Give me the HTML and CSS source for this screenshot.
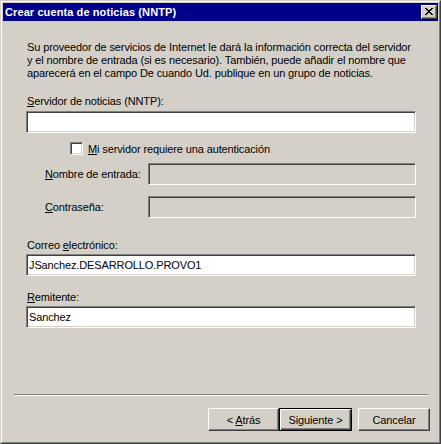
FILE: index.html
```html
<!DOCTYPE html>
<html lang="es">
<head>
<meta charset="utf-8">
<title>Crear cuenta de noticias (NNTP)</title>
<link rel="stylesheet" href="styles.css">
</head>
<body>
<div class="window">
  <div class="frame">
    <div class="titlebar">
      <span class="title">Crear cuenta de noticias (NNTP)</span>
      <button class="close" type="button" aria-label="Cerrar">
        <svg width="8" height="7" viewBox="0 0 8 7" shape-rendering="crispEdges">
          <path d="M0 0h2v1h-2zM6 0h2v1h-2zM1 1h2v1h-2zM5 1h2v1h-2zM2 2h4v1h-4zM3 3h2v1h-2zM2 4h4v1h-4zM1 5h2v1h-2zM5 5h2v1h-2zM0 6h2v1h-2zM6 6h2v1h-2z" fill="#000"/>
        </svg>
      </button>
    </div>
    <div class="body">
      <div class="page">
        <p class="intro">Su proveedor de servicios de Internet le dará la información correcta del servidor<br>y el nombre de entrada (si es necesario). También, puede añadir el nombre que<br>aparecerá en el campo De cuando Ud. publique en un grupo de noticias.</p>
        <div class="lbl lbl-server"><u>S</u>ervidor de noticias (NNTP):</div>
        <div class="field field-server"></div>
        <div class="check-row">
          <span class="checkbox"></span>
          <span class="check-text"><u>M</u>i servidor requiere una autenticación</span>
        </div>
        <div class="auth-row">
          <span class="auth-lbl"><u>N</u>ombre de entrada:</span>
          <div class="field disabled"></div>
        </div>
        <div class="auth-row auth-row-2">
          <span class="auth-lbl"><u>C</u>ontraseña:</span>
          <div class="field disabled"></div>
        </div>
        <div class="lbl lbl-email">Correo <u>e</u>lectrónico:</div>
        <div class="field field-tight">JSanchez.DESARROLLO.PROVO1</div>
        <div class="lbl lbl-from"><u>R</u>emitente:</div>
        <div class="field field-tight">Sanchez</div>
      </div>
      <div class="footer">
        <div class="sep"></div>
        <div class="buttons">
          <button class="btn btn-back" type="button">&lt; <u>A</u>trás</button>
          <button class="btn btn-next btn-default" type="button">Siguiente &gt;</button>
          <button class="btn btn-cancel" type="button">Cancelar</button>
        </div>
      </div>
    </div>
  </div>
</div>
</body>
</html>
```
FILE: styles.css
```css
html, body {
  margin: 0;
  padding: 0;
  background: #d4d0c8;
}

body {
  font-family: "Liberation Sans", Arial, sans-serif;
  font-size: 11px;
  color: #000;
}

.window {
  width: 441px;
  height: 444px;
  box-sizing: border-box;
  border: 1px solid;
  border-color: #d4d0c8 #404040 #404040 #d4d0c8;
  background: #d4d0c8;
}

.frame {
  height: 100%;
  box-sizing: border-box;
  border: 1px solid;
  border-color: #ffffff #808080 #808080 #ffffff;
  padding: 1px;
  display: flex;
  flex-direction: column;
}

.titlebar {
  height: 18px;
  flex: none;
  background: #00008a;
  display: flex;
  align-items: center;
  justify-content: space-between;
  padding: 0 1px 0 2px;
}

.title {
  color: #fff;
  font-weight: bold;
  font-size: 11px;
  letter-spacing: 0.1px;
}

.close {
  width: 16px;
  height: 14px;
  box-sizing: border-box;
  padding: 0;
  border: 1px solid;
  border-color: #ffffff #404040 #404040 #ffffff;
  box-shadow: inset -1px -1px 0 #808080;
  background: #d4d0c8;
  display: flex;
  align-items: center;
  justify-content: center;
}

.close svg {
  display: block;
  margin: 0 1px 1px 0;
}

.body {
  flex: 1;
  display: flex;
  flex-direction: column;
}

.page {
  flex: 1;
  padding: 20px 22px 0 23px;
  letter-spacing: -0.12px;
}

.intro {
  margin: 0;
  line-height: 13px;
  padding-left: 1px;
  white-space: nowrap;
}

.lbl {
  line-height: 13px;
  padding-left: 1px;
}

.lbl-server { margin-top: 15px; }
.lbl-email { margin-top: 21px; }
.lbl-from { margin-top: 15px; }

.field {
  height: 22px;
  box-sizing: border-box;
  border: 1px solid;
  border-color: #808080 #ffffff #ffffff #808080;
  box-shadow: inset 1px 1px 0 #404040, inset -1px -1px 0 #d4d0c8;
  background: #ffffff;
  padding-left: 2px;
  line-height: 20px;
  white-space: nowrap;
}

.field-server { margin-top: 3px; }
.field-tight { margin-top: 2px; }

.field.disabled {
  background: #d4d0c8;
}

.check-row {
  display: flex;
  align-items: center;
  height: 13px;
  margin: 9px 0 0 44px;
  gap: 5px;
}

.checkbox {
  width: 13px;
  height: 13px;
  box-sizing: border-box;
  border: 1px solid;
  border-color: #808080 #ffffff #ffffff #808080;
  box-shadow: inset 1px 1px 0 #404040, inset -1px -1px 0 #d4d0c8;
  background: #ffffff;
  flex: none;
}

.auth-row {
  display: flex;
  align-items: center;
  margin-top: 8px;
  padding-left: 19px;
}

.auth-row-2 { margin-top: 11px; }

.auth-lbl {
  width: 103px;
  flex: none;
}

.auth-row .field {
  flex: 1;
}

.footer {
  flex: none;
  padding-bottom: 10px;
}

.sep {
  height: 0;
  border-top: 1px solid #808080;
  border-bottom: 1px solid #ffffff;
  margin: 0 10px 0 11px;
}

.buttons {
  display: flex;
  justify-content: flex-end;
  margin-top: 12px;
  padding-right: 8px;
}

.btn {
  height: 23px;
  box-sizing: border-box;
  padding: 0;
  border: 1px solid;
  border-color: #ffffff #404040 #404040 #ffffff;
  box-shadow: inset -1px -1px 0 #808080;
  background: #d4d0c8;
  font-family: "Liberation Sans", Arial, sans-serif;
  font-size: 11px;
  letter-spacing: -0.12px;
  color: #000;
  text-align: center;
}

.btn-back { width: 71px; }
.btn-next { width: 73px; }
.btn-cancel { width: 72px; margin-left: 6px; }

.btn-default {
  border: 1px solid #000;
  box-shadow: inset 1px 1px 0 #ffffff, inset -1px -1px 0 #404040, inset -2px -2px 0 #808080;
}
```
